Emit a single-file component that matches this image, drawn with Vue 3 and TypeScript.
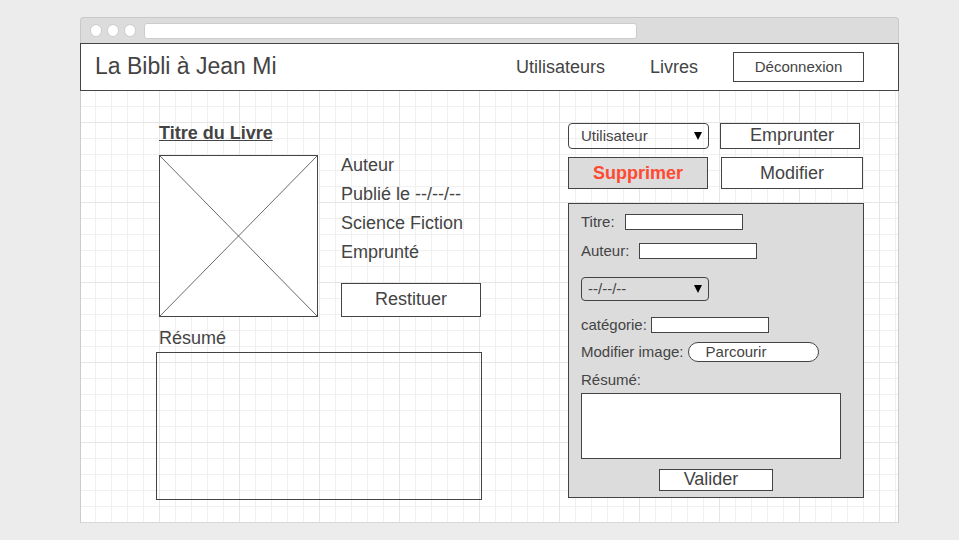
<script setup lang="ts">
import { reactive, ref } from 'vue'

interface BookForm {
  title: string
  author: string
  date: string
  category: string
  summary: string
}

const details: string[] = ['Auteur', 'Publié le --/--/--', 'Science Fiction', 'Emprunté']
const users: string[] = ['Utilisateur']
const dates: string[] = ['--/--/--']

const selectedUser = ref<string>(users[0])
const form = reactive<BookForm>({
  title: '',
  author: '',
  date: dates[0],
  category: '',
  summary: '',
})
</script>

<template>
  <div class="window">
    <div class="toolbar">
      <div class="dots"><span></span><span></span><span></span></div>
      <div class="address"></div>
    </div>

    <header class="header">
      <h1 class="brand">La Bibli à Jean Mi</h1>
      <nav class="nav">
        <a href="#utilisateurs">Utilisateurs</a>
        <a href="#livres">Livres</a>
      </nav>
      <button type="button" class="btn logout">Déconnexion</button>
    </header>

    <main class="canvas">
      <section class="book">
        <div class="book-main">
          <h2 class="book-title">Titre du Livre</h2>
          <div class="book-row">
            <svg class="cover" viewBox="0 0 159 162" aria-hidden="true">
              <rect x="0.5" y="0.5" width="158" height="161" fill="#fff" stroke="#444" />
              <path d="M1 1 158 161M158 1 1 161" fill="none" stroke="#444" stroke-width="0.8" />
            </svg>
            <div class="info">
              <ul class="details">
                <li v-for="item in details" :key="item">{{ item }}</li>
              </ul>
              <button type="button" class="btn restore">Restituer</button>
            </div>
          </div>
          <h3 class="summary-title">Résumé</h3>
        </div>
        <div class="summary-box"></div>
      </section>

      <section class="side">
        <div class="actions lend">
          <div class="picker">
            <select v-model="selectedUser" aria-label="Utilisateur">
              <option v-for="user in users" :key="user" :value="user">{{ user }}</option>
            </select>
            <svg viewBox="0 0 8 8" aria-hidden="true"><path d="M0 0H8L4 8Z" /></svg>
          </div>
          <button type="button" class="btn">Emprunter</button>
        </div>
        <div class="actions manage">
          <button type="button" class="btn danger">Supprimer</button>
          <button type="button" class="btn edit">Modifier</button>
        </div>

        <form class="panel" @submit.prevent>
          <div class="field">
            <label for="title">Titre:</label>
            <input id="title" v-model="form.title" type="text" />
          </div>
          <div class="field author">
            <label for="author">Auteur:</label>
            <input id="author" v-model="form.author" type="text" />
          </div>
          <div class="picker date">
            <select v-model="form.date" aria-label="Date de publication">
              <option v-for="date in dates" :key="date" :value="date">{{ date }}</option>
            </select>
            <svg viewBox="0 0 8 8" aria-hidden="true"><path d="M0 0H8L4 8Z" /></svg>
          </div>
          <div class="field tight category">
            <label for="category">catégorie:</label>
            <input id="category" v-model="form.category" type="text" />
          </div>
          <div class="field tight image">
            <label for="browse">Modifier image:</label>
            <button id="browse" type="button" class="btn browse">Parcourir</button>
          </div>
          <label class="summary-label" for="summary">Résumé:</label>
          <textarea id="summary" v-model="form.summary"></textarea>
          <button type="submit" class="btn submit">Valider</button>
        </form>
      </section>
    </main>
  </div>
</template>

<style>
body {
  margin: 0;
  background: #ececec;
}
</style>

<style scoped>
* {
  box-sizing: border-box;
}

.window {
  margin: 17px 60px 17px 80px;
  color: #444;
  font: 18px/20px "Liberation Sans", Arial, sans-serif;
}

h1,
h2,
h3,
ul {
  margin: 0;
  padding: 0;
  font-weight: normal;
  list-style: none;
}

button,
input,
select,
textarea {
  margin: 0;
  padding: 0;
  border: 1px solid #444;
  border-radius: 0;
  background: #fff;
  color: inherit;
  font: inherit;
}

.toolbar {
  display: flex;
  align-items: center;
  gap: 8px;
  height: 26px;
  padding: 0 9px;
  border: 1px solid #c8c8c8;
  border-bottom: 0;
  border-radius: 4px 4px 0 0;
  background: #dcdcdc;
}

.dots {
  display: flex;
  gap: 5px;
}

.dots span {
  width: 12px;
  height: 13px;
  border: 1px solid #ccc;
  border-radius: 50%;
  background: #fff;
}

.address {
  flex: 0 1 493px;
  height: 16px;
  border: 1px solid #ccc;
  border-radius: 3px;
  background: #fff;
}

.header {
  display: flex;
  align-items: center;
  height: 48px;
  padding: 0 34px 0 14px;
  border: 1px solid #444;
  background: #fff;
}

.brand {
  flex: 1;
  padding-bottom: 2px;
  font-size: 23px;
  line-height: 26px;
}

.nav {
  display: flex;
  gap: 45px;
  margin-right: 35px;
}

.nav a {
  color: inherit;
  text-decoration: none;
}

.btn.logout {
  width: 131px;
  height: 30px;
  font-size: 15px;
}

.canvas {
  display: grid;
  grid-template-columns: minmax(326px, 1fr) 296px;
  gap: 86px;
  align-items: start;
  padding: 32px 34px 22px 75px;
  border: 1px solid #ccc;
  border-top: 0;
  border-bottom-color: #d8d8d8;
  background-color: #fff;
  background-image:
    linear-gradient(90deg, #e6e6e6 1px, transparent 1px),
    linear-gradient(#e6e6e6 1px, transparent 1px),
    linear-gradient(90deg, #f0f0f0 1px, transparent 1px),
    linear-gradient(#f0f0f0 1px, transparent 1px);
  background-size: 80px 80px, 80px 80px, 16px 16px, 16px 16px;
  background-position: 78px 0, 0 31px, 14px 0, 0 15px;
}

.book-main {
  padding-left: 3px;
}

.book-title {
  font-size: 18px;
  font-weight: bold;
  text-decoration: underline;
}

.book-row {
  display: flex;
  gap: 23px;
  margin: 12px 0 11px;
}

.cover {
  display: block;
  width: 159px;
  height: 162px;
}

.info {
  display: flex;
  flex: 1;
  flex-direction: column;
  justify-content: space-between;
}

.details {
  display: grid;
  gap: 9px;
}

.btn.restore {
  width: 140px;
  height: 34px;
  padding-bottom: 2px;
}

.summary-title {
  font-size: 18px;
}

.summary-box {
  height: 148px;
  margin-top: 4px;
  border: 1px solid #444;
}

.actions {
  display: flex;
}

.lend {
  gap: 11px;
}

.lend .btn {
  width: 140px;
  padding: 0 0 3px 4px;
}

.manage {
  gap: 13px;
  margin: 8px 0 14px;
}

.manage .btn {
  width: 140px;
  height: 32px;
}

.manage .edit {
  width: 142px;
}

.manage .danger {
  background: #dcdcdc;
  color: #ff4a32;
  font-weight: bold;
}

.picker {
  display: grid;
  align-items: center;
  width: 141px;
  height: 26px;
  font-size: 15px;
}

.picker select,
.picker svg {
  grid-area: 1 / 1;
}

.picker select {
  width: 100%;
  height: 100%;
  padding-left: 12px;
  border-radius: 4px;
  background: transparent;
  appearance: none;
}

.picker svg {
  justify-self: end;
  width: 8px;
  height: 8px;
  margin-right: 7px;
  fill: #000;
  pointer-events: none;
}

.panel {
  display: flex;
  flex-direction: column;
  padding: 8px 22px 6px 12px;
  border: 1px solid #444;
  background: #dcdcdc;
  font-size: 15px;
}

.field {
  display: flex;
  align-items: center;
  gap: 10px;
  height: 20px;
}

.field.tight {
  gap: 4px;
}

.field input {
  width: 118px;
  height: 16px;
}

.author {
  margin-top: 9px;
}

.picker.date {
  width: 128px;
  height: 24px;
  margin-top: 16px;
}

.picker.date select {
  padding-left: 6px;
}

.category {
  margin-top: 14px;
}

.image {
  margin-top: 7px;
}

.btn.browse {
  width: 131px;
  height: 20px;
  padding-left: 17px;
  border-radius: 10px;
  line-height: 18px;
  text-align: left;
}

.summary-label {
  margin-top: 8px;
}

.panel textarea {
  display: block;
  width: 100%;
  height: 66px;
  margin-top: 3px;
  resize: none;
}

.btn.submit {
  align-self: center;
  width: 114px;
  height: 22px;
  margin: 10px 0 0 10px;
  padding: 0 10px 2px 0;
  font-size: 18px;
  line-height: 18px;
}
</style>
